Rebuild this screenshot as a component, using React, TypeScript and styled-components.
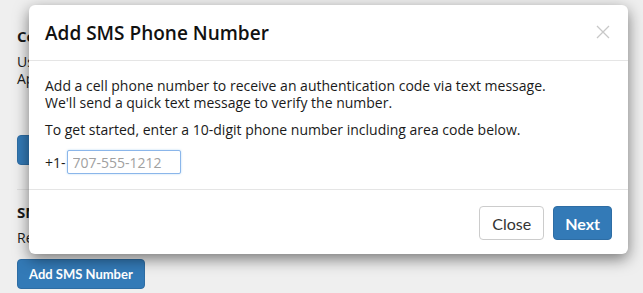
import React from 'react'
import styled, { createGlobalStyle } from 'styled-components'

const GlobalStyle = createGlobalStyle`
  html, body {
    margin: 0;
    padding: 0;
    background: #efefef;
    font-family: 'Open Sans', 'Liberation Sans', sans-serif;
    color: #1a1a1a;
  }
`

const S = {
  Page: styled.div`
    position: relative;
    width: 643px;
    height: 293px;
    overflow: hidden;
    padding: 26px 17px 0;
    box-sizing: border-box;
  `,
  Section: styled.section`
    padding-bottom: 24px;
    & + & {
      border-top: 1px solid #dedede;
      padding-top: 12px;
    }
  `,
  Heading: styled.h3`
    margin: 0 0 7px;
    font-size: 15px;
    line-height: 20px;
    font-weight: 700;
  `,
  Text: styled.p`
    margin: 0;
    font-size: 14px;
    line-height: 17px;
  `,
  PageButton: styled.button<{ $space: number }>`
    display: block;
    margin-top: ${p => p.$space}px;
    height: 30px;
    padding: 0 11px;
    border: 1px solid #2e6da4;
    border-radius: 4px;
    background: #337ab7;
    color: #fff;
    font-family: Lato, 'Liberation Sans', sans-serif;
    font-size: 13px;
    font-weight: 700;
  `,
  Modal: styled.div`
    position: absolute;
    left: 29px;
    top: 5px;
    width: 599px;
    background: #fff;
    border-radius: 6px;
    box-shadow: 0 5px 15px rgba(0, 0, 0, 0.5);
  `,
  Header: styled.div`
    display: flex;
    align-items: center;
    justify-content: space-between;
    height: 55px;
    padding: 0 16px;
    border-bottom: 1px solid #e5e5e5;
  `,
  Title: styled.h4`
    margin: 0;
    font-size: 19px;
    font-weight: 600;
    color: #111;
  `,
  CloseX: styled.button`
    border: 0;
    background: none;
    padding: 0;
    width: 14px;
    height: 14px;
    margin-right: 2px;
    margin-top: -1px;
    display: flex;
  `,
  Body: styled.div`
    padding: 16px 16px 15px;
  `,
  Para: styled.p`
    margin: 0 0 10px;
    font-size: 14px;
    line-height: 17px;
  `,
  PhoneRow: styled.div`
    display: flex;
    align-items: center;
    gap: 1px;
    margin-top: 12px;
    font-size: 14px;
  `,
  Input: styled.input`
    width: 114px;
    height: 24px;
    box-sizing: border-box;
    padding: 0 5px;
    border: 1px solid #8bb6ea;
    border-radius: 2px;
    outline: none;
    box-shadow: 0 0 2px rgba(102, 175, 233, 0.5);
    font-family: 'Open Sans', 'Liberation Sans', sans-serif;
    font-size: 14px;
    &::placeholder {
      color: #a0a0a0;
    }
  `,
  Footer: styled.div`
    display: flex;
    justify-content: flex-end;
    gap: 9px;
    padding: 16px 16px 14px;
    border-top: 1px solid #e5e5e5;
  `,
  Button: styled.button<{ $primary?: boolean }>`
    height: 34px;
    padding: 0 ${p => (p.$primary ? 11 : 12)}px;
    border-radius: 4px;
    font-family: Lato, 'Liberation Sans', sans-serif;
    font-size: 16px;
    font-weight: ${p => (p.$primary ? 700 : 400)};
    border: 1px solid ${p => (p.$primary ? '#2e6da4' : '#ccc')};
    background: ${p => (p.$primary ? '#337ab7' : '#fff')};
    color: ${p => (p.$primary ? '#fff' : '#333')};
  `,
}

export default function App() {
  return (
    <>
      <GlobalStyle />
      <S.Page>
        <S.Section>
          <S.Heading>Code Generator</S.Heading>
          <S.Text>Use an app on your phone to get codes.</S.Text>
          <S.Text>Apps work offline.</S.Text>
          <S.PageButton $space={48}>Set Up App</S.PageButton>
        </S.Section>
        <S.Section>
          <S.Heading>SMS Number</S.Heading>
          <S.Text>Receive codes by text.</S.Text>
          <S.PageButton $space={13}>Add SMS Number</S.PageButton>
        </S.Section>

        <S.Modal role="dialog">
          <S.Header>
            <S.Title>Add SMS Phone Number</S.Title>
            <S.CloseX aria-label="Close">
              <svg width="14" height="14" viewBox="0 0 14 14">
                <path d="M1 1L13 13M13 1L1 13" stroke="#c8c8c8" strokeWidth="1.3" />
              </svg>
            </S.CloseX>
          </S.Header>
          <S.Body>
            <S.Para>
              Add a cell phone number to receive an authentication code via text message.
              <br />
              We'll send a quick text message to verify the number.
            </S.Para>
            <S.Para>To get started, enter a 10-digit phone number including area code below.</S.Para>
            <S.PhoneRow>
              +1-
              <S.Input placeholder="707-555-1212" />
            </S.PhoneRow>
          </S.Body>
          <S.Footer>
            <S.Button>Close</S.Button>
            <S.Button $primary>Next</S.Button>
          </S.Footer>
        </S.Modal>
      </S.Page>
    </>
  )
}
